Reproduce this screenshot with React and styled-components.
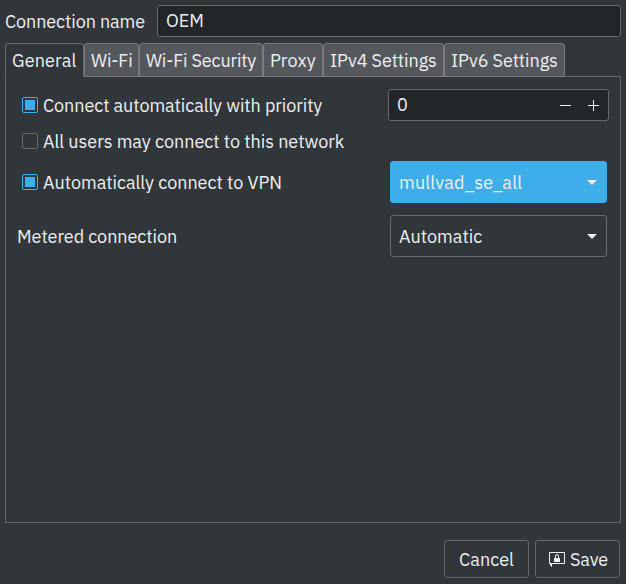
import React from "react";
import styled, { createGlobalStyle } from "styled-components";

const colors = {
  window: "#31363b",
  view: "#232629",
  border: "#65696c",
  tab: "#54585d",
  text: "#eff0f1",
  accent: "#3daee9",
};

const GlobalStyle = createGlobalStyle`
  *, *::before, *::after { box-sizing: border-box; }
  body {
    margin: 0;
    background: ${colors.window};
    color: ${colors.text};
    font-family: "IBM Plex Sans", "Noto Sans", sans-serif;
    font-size: 18px;
    line-height: 24px;
    overflow: hidden;
  }
`;

const Dialog = styled.main`
  display: flex;
  flex-direction: column;
  width: 626px;
  height: 584px;
  padding: 5px 5px 6px;
`;

const Text = styled.span`
  display: inline-block;
  padding-top: 2px;
  white-space: pre;
  letter-spacing: ${(p) => p.$track || 0}px;
`;

const NameRow = styled.label`
  display: grid;
  grid-template-columns: 152px 464px;
  align-items: center;
  height: 32px;
`;

const Field = styled.div`
  display: flex;
  align-items: center;
  height: 32px;
  padding: 0 8px;
  background: ${colors.view};
  border: 1px solid ${colors.border};
  border-radius: 3px;
  ${Text} { padding-top: 0; }
`;

const TabBar = styled.nav`
  display: flex;
  height: 34px;
  margin: 6px 0 -1px;
  position: relative;
`;

const Tab = styled.button`
  display: flex;
  align-items: center;
  width: ${(p) => p.$width}px;
  height: 34px;
  padding: 0 0 1px 6px;
  font: inherit;
  color: inherit;
  background: ${(p) => (p.$active ? colors.window : colors.tab)};
  border: 1px solid ${(p) => (p.$active ? colors.border : "#7a7e81")};
  border-bottom-color: ${(p) => (p.$active ? colors.window : "#7a7e81")};
  border-radius: 3px 3px 0 0;
`;

const Panel = styled.section`
  width: 616px;
  height: 447px;
  padding: 12px 11px;
  border: 1px solid ${colors.border};
`;

const Row = styled.div`
  display: grid;
  grid-template-columns: ${(p) => p.$left || 373}px auto;
  align-items: center;
  height: ${(p) => p.$height}px;
  margin-bottom: ${(p) => p.$gap || 0}px;
`;

const CheckLabel = styled.label`
  display: flex;
  align-items: center;
  gap: 5px;
  height: 24px;
  padding-left: 5px;
`;

const CheckBox = styled.span`
  width: 16px;
  height: 16px;
  padding: 2px;
  border: 1px solid ${(p) => (p.$checked ? colors.accent : colors.border)};
  border-radius: 2px;
  &::before {
    content: "";
    display: block;
    height: 10px;
    background: ${(p) => (p.$checked ? colors.accent : "transparent")};
  }
`;

const SpinBox = styled(Field)`
  width: 221px;
  padding: 0 9px 0 8px;
  svg { margin-left: auto; }
`;

const Select = styled.button`
  display: flex;
  align-items: center;
  justify-content: space-between;
  width: 217px;
  height: 42px;
  padding: 0 9px 0 8px;
  font: inherit;
  color: inherit;
  background: ${(p) => (p.$active ? colors.accent : colors.window)};
  border: 1px solid ${(p) => (p.$active ? colors.accent : colors.border)};
  border-radius: 3px;
`;

const Actions = styled.footer`
  display: flex;
  justify-content: flex-end;
  gap: 6px;
  margin-top: auto;
  padding-right: 1px;
`;

const Button = styled.button`
  display: flex;
  align-items: center;
  justify-content: flex-start;
  gap: 5px;
  width: 85px;
  height: 38px;
  padding: 0 0 0 ${(p) => p.$inset}px;
  font: inherit;
  color: inherit;
  background: ${colors.window};
  border: 1px solid ${colors.border};
  border-radius: 3px;
  box-shadow: 0 1px 1px rgba(0, 0, 0, 0.15);
  svg { margin-top: 2px; }
`;

const Arrow = () => (
  <svg width="10" height="5" viewBox="0 0 10 5">
    <path d="M0 0h10L5 5z" fill={colors.text} />
  </svg>
);

const Steppers = () => (
  <svg width="39" height="11" viewBox="0 0 39 11" fill={colors.text}>
    <path d="M0 5h11v1H0zM28 5h11v1H28zM33 0h1v11h-1z" />
  </svg>
);

const LockBubble = () => (
  <svg width="16" height="16" viewBox="0 0 16 16">
    <path d="M.5.5h15v11H.5z" fill="none" stroke={colors.text} />
    <path d="M1 12h2v3.5L1 13z" fill={colors.text} />
    <path d="M6.5 6V4a1.5 1.5 0 0 1 3 0v2" fill="none" stroke={colors.text} />
    <path d="M5 6h6v4H5z" fill={colors.text} />
  </svg>
);

const tabs = [
  { label: "General", width: 79, active: true, track: 0.15 },
  { label: "Wi-Fi", width: 55, track: -0.15 },
  { label: "Wi-Fi Security", width: 124, track: -0.17 },
  { label: "Proxy", width: 60, track: 0.1 },
  { label: "IPv4 Settings", width: 121, track: -0.08 },
  { label: "IPv6 Settings", width: 121, track: -0.08 },
];

export default function App() {
  return (
    <>
      <GlobalStyle />
      <Dialog>
        <NameRow>
          <Text $track={-0.1}>Connection name</Text>
          <Field><Text>OEM</Text></Field>
        </NameRow>
        <TabBar>
          {tabs.map((t) => (
            <Tab key={t.label} $width={t.width} $active={t.active}>
              <Text $track={t.track}>{t.label}</Text>
            </Tab>
          ))}
        </TabBar>
        <Panel>
          <Row $height={32} $left={371} $gap={8}>
            <CheckLabel><CheckBox $checked /><Text $track={-0.08}>Connect automatically with priority</Text></CheckLabel>
            <SpinBox><Text>0</Text><Steppers /></SpinBox>
          </Row>
          <Row $height={24} $gap={8}>
            <CheckLabel><CheckBox /><Text $track={-0.03}>All users may connect to this network</Text></CheckLabel>
          </Row>
          <Row $height={42} $gap={12}>
            <CheckLabel><CheckBox $checked /><Text $track={-0.03}>Automatically connect to VPN</Text></CheckLabel>
            <Select $active><Text $track={0.2}>mullvad_se_all</Text><Arrow /></Select>
          </Row>
          <Row $height={42}>
            <Text $track={-0.06}>Metered connection</Text>
            <Select><Text>Automatic</Text><Arrow /></Select>
          </Row>
        </Panel>
        <Actions>
          <Button $inset={14}><Text $track={0.05}>Cancel</Text></Button>
          <Button $inset={13}><LockBubble /><Text $track={-0.15}>Save</Text></Button>
        </Actions>
      </Dialog>
    </>
  );
}
